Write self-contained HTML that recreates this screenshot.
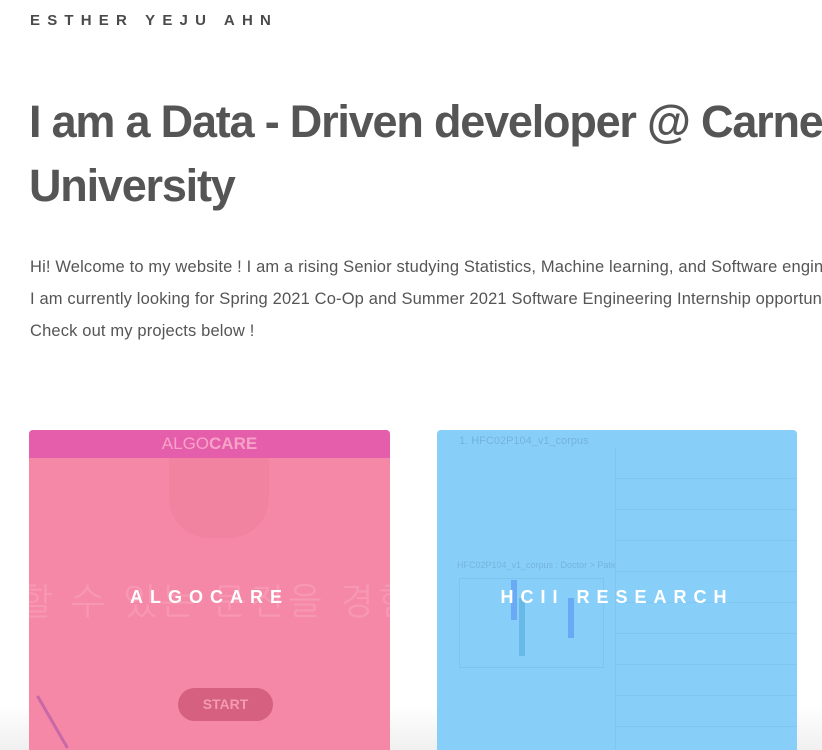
<!DOCTYPE html>
<html><head><meta charset="utf-8"><style>
*{margin:0;padding:0;box-sizing:border-box}
html,body{width:822px;height:750px;overflow:hidden}
body{background:#fff;font-family:"Liberation Sans",sans-serif;color:#555;position:relative}
.name{position:absolute;left:30px;top:12px;font-size:15px;font-weight:bold;letter-spacing:7.2px;color:#4a4a4a;white-space:nowrap}
h1{position:absolute;left:29px;top:90px;font-size:45px;line-height:64px;font-weight:bold;letter-spacing:-1.2px;color:#555;white-space:nowrap}
.p{position:absolute;left:30px;top:251px;font-size:16.5px;line-height:32px;color:#555;white-space:nowrap;letter-spacing:0.15px}
.card{position:absolute;top:430px;height:330px;border-radius:4px;overflow:hidden}
.c1{left:29px;width:361px;background:#f488a6}
.c2{left:437px;width:360px;background:#87cff9}
.hdr{position:absolute;left:0;top:0;width:100%;height:28px;background:#e55eab;text-align:center;color:#f8a2c8;font-size:17px;line-height:28px}
.title{position:absolute;left:0;width:100%;top:157px;text-align:center;color:#fff;font-weight:bold;font-size:18px;letter-spacing:7px}
.ko{position:absolute;left:-10px;top:150px;font-family:"Liberation Sans","NanumGothic",sans-serif;font-size:36px;color:#f797b3;white-space:nowrap;letter-spacing:4px}
.start{position:absolute;left:149px;top:258px;width:95px;height:33px;border-radius:17px;background:#d5607f;color:#f49ab3;font-weight:bold;font-size:14px;text-align:center;line-height:33px}
.fade{position:absolute;left:0;right:0;top:705px;height:45px;background:linear-gradient(#fff0,#f0f0f0);}
.txt{position:absolute;color:#74b3dc;font-size:7px;white-space:nowrap}
</style></head><body>
<div class="name">ESTHER YEJU AHN</div>
<h1>I am a Data - Driven developer @ Carnegie Mellon<br>University</h1>
<div class="p">Hi! Welcome to my website ! I am a rising Senior studying Statistics, Machine learning, and Software engineering<br>I am currently looking for Spring 2021 Co-Op and Summer 2021 Software Engineering Internship opportunities<br>Check out my projects below !</div>
<div class="fade"></div>
<div class="card c1">
<div class="hdr">ALGO<b>CARE</b></div>
<div style="position:absolute;left:140px;top:28px;width:100px;height:80px;background:#f283a0;border-radius:0 0 40px 40px"></div>
<div class="ko">할 수 있는 문진을 경험하</div>
<div class="title">ALGOCARE</div>
<div class="start">START</div>
<div style="position:absolute;left:22px;top:262px;width:3px;height:60px;background:#c868a8;transform:rotate(-30deg)"></div>
</div>
<div class="card c2">
<div class="txt" style="left:22px;top:5px;font-size:11px">1. HFC02P104_v1_corpus</div>
<div class="txt" style="left:20px;top:130px;font-size:9px">HFC02P104_v1_corpus : Doctor &gt; Patient</div>
<div style="position:absolute;left:22px;top:148px;width:145px;height:90px;border:1px solid #80c4ee"></div>
<div style="position:absolute;left:178px;top:18px;width:182px;height:312px;border-left:1px solid #80c6f0;background:repeating-linear-gradient(#87cff9 0 30px,#80c6f0 30px 31px)"></div>
<div style="position:absolute;left:74px;top:150px;width:6px;height:40px;background:#6aa9f4"></div>
<div style="position:absolute;left:82px;top:168px;width:6px;height:58px;background:#68b9e6"></div>
<div style="position:absolute;left:131px;top:168px;width:6px;height:40px;background:#6aa9f4"></div>
<div class="title">HCII RESEARCH</div>
</div>
</body></html>
